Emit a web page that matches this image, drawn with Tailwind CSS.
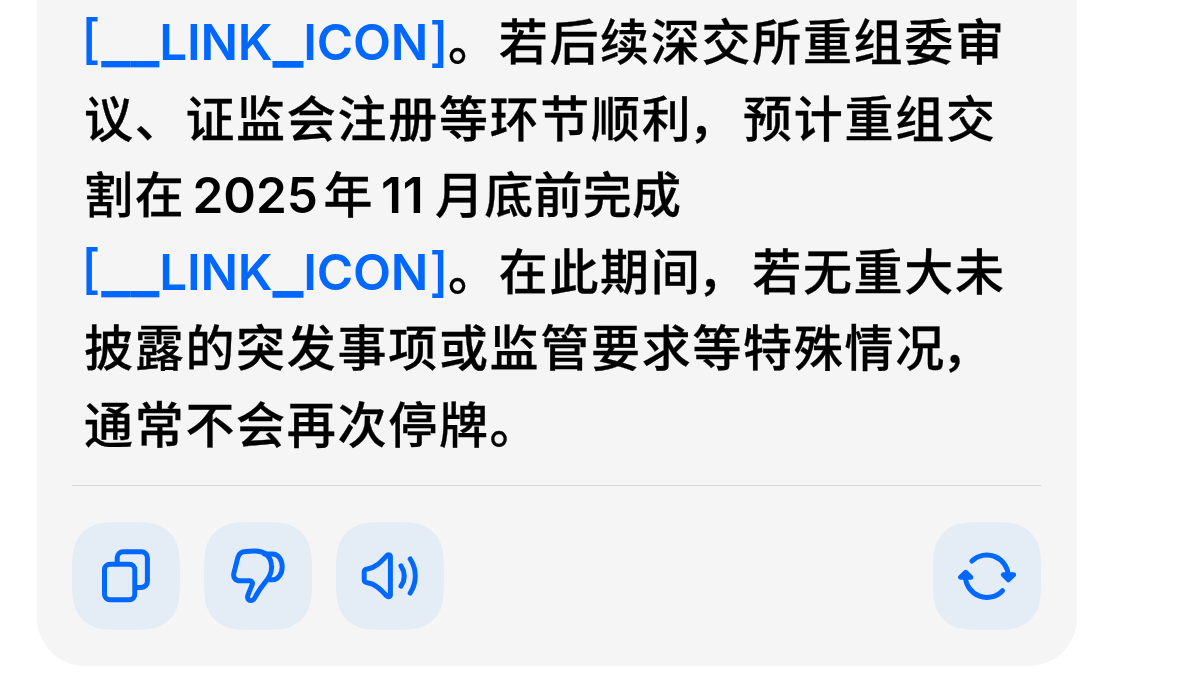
<!DOCTYPE html>
<html lang="zh-CN">
  <head>
    <meta charset="UTF-8" />
    <meta name="viewport" content="width=device-width, initial-scale=1.0" />
    <script src="https://cdn.jsdelivr.net/npm/@tailwindcss/browser@4"></script>
    <title>Chat</title>
  </head>

  <body class="bg-white">
    <svg class="hidden">
      <symbol id="tile" viewBox="0 0 108 108">
        <path
          d="M0 54C0 39.2 0 31.3 2.7 22.7C6.1 13.4 13.4 6.1 22.7 2.7C31.3 0 39.2 0 54 0C68.8 0 76.7 0 85.3 2.7C94.6 6.1 101.9 13.4 105.3 22.7C108 31.3 108 39.2 108 54C108 68.8 108 76.7 105.3 85.3C101.9 94.6 94.6 101.9 85.3 105.3C76.7 108 68.8 108 54 108C39.2 108 31.3 108 22.7 105.3C13.4 101.9 6.1 94.6 2.7 85.3C0 76.7 0 68.8 0 54Z"
        />
      </symbol>
    </svg>

    <div class="w-[1179px] h-[700px] overflow-hidden pl-[37px]">
      <div
        class="w-[1040px] h-[666px] bg-[#f5f5f5] rounded-b-[48px] pt-[5px] pl-[35px] pr-[36px]"
      >
        <div
          class="h-[480px] pl-[12px] font-['Inter','Noto_Sans_CJK_SC',sans-serif] text-[49px] leading-[76.5px] tracking-[1.7px] font-medium text-black whitespace-nowrap [-webkit-text-stroke:0.3px]"
        >
          <p class="flex h-[76.5px]">
            <a class="w-[367px] shrink-0 -ml-[3px] -mt-[1px] text-[#0068ff] text-[49.5px] font-semibold tracking-[-0.2px] [-webkit-text-stroke:0px]"><span class="text-[53px] align-[2px] leading-[0] font-medium mr-[1px]">[</span><span class="text-[62px] leading-[0] align-[-1px]">__</span>LINK<span class="text-[66px] leading-[0] align-[-1px]">_</span>ICON<span class="text-[53px] leading-[0] font-medium ml-[1px] align-[-1px]">]</span></a>
            <span>。若后续深交所重组委审</span>
          </p>
          <p class="flex h-[76.5px]">议、证监会注册等环节顺利<span class="-ml-[4px] mr-[4px]">，</span>预计重组交</p>
          <p class="flex h-[76.5px]">
            割在<span class="w-[138px] pl-[7px] -mt-[1px] text-[49.5px] font-semibold tracking-[0px] [-webkit-text-stroke:0px]">2025</span>年<span class="w-[61px] pl-[7px] -mt-[1px] text-[49.5px] font-semibold tracking-[0.8px] [-webkit-text-stroke:0px]">11</span><span class="tracking-[0.2px]">月底前完成</span>
          </p>
          <p class="flex h-[76.5px]">
            <a class="w-[367px] shrink-0 -ml-[3px] -mt-[1px] text-[#0068ff] text-[49.5px] font-semibold tracking-[-0.2px] [-webkit-text-stroke:0px]"><span class="text-[53px] align-[2px] leading-[0] font-medium mr-[1px]">[</span><span class="text-[62px] leading-[0] align-[-1px]">__</span>LINK<span class="text-[66px] leading-[0] align-[-1px]">_</span>ICON<span class="text-[53px] leading-[0] font-medium ml-[1px] align-[-1px]">]</span></a>
            <span>。在此期间<span class="-ml-[4px] mr-[4px]">，</span>若无重大未</span>
          </p>
          <p class="flex h-[76.5px]">披露的突发事项或监管要求等特殊情况<span class="-ml-[4px]">，</span></p>
          <p class="flex h-[76.5px]">通常不会再次停牌。</p>
        </div>

        <div class="flex gap-[24px] border-t border-[#d9d9d9] pt-[36px]">
          <button type="button" aria-label="复制">
            <svg class="size-[108px]" viewBox="0 0 108 108" fill="none" stroke="#0068ff" stroke-width="5" stroke-linecap="round" stroke-linejoin="round">
              <use href="#tile" fill="#e4edf5" stroke="none" />
              <path stroke-linecap="butt" d="M45.2 42V35.8a6 6 0 0 1 6-6H69.4a6 6 0 0 1 6 6V59.4a6 6 0 0 1-6 6H63" />
              <rect x="32.5" y="42.2" width="30.3" height="35.6" rx="5.5" />
            </svg>
          </button>
          <button type="button" aria-label="踩">
            <svg class="size-[108px]" viewBox="0 0 108 108" fill="none" stroke="#0068ff" stroke-width="5" stroke-linecap="round" stroke-linejoin="round">
              <use href="#tile" fill="#e4edf5" stroke="none" />
              <path d="M42 29.4C38 29.5 35 31.5 34 35L29.9 51C28.8 55.5 31.5 58.8 36 58.8H45.5C48 58.8 49 60.3 48.2 62.5L43.8 73.5C43 76.5 44.5 78.6 46.8 78.6C48.8 78.6 50 77.5 51 75.5C54 69.5 57.5 64.5 61.5 59.8C66.5 54 68.3 48.5 67.4 42.5C66.3 33.5 60.5 29 50 29.1Z" />
              <path d="M60.5 31.9H68.5C74.5 31.9 78.2 38 78.2 45C78.2 52 74 57.8 68.5 57.8H64" />
            </svg>
          </button>
          <button type="button" aria-label="朗读">
            <svg class="size-[108px]" viewBox="0 0 108 108" fill="none" stroke="#0068ff" stroke-width="5" stroke-linecap="round" stroke-linejoin="round">
              <use href="#tile" fill="#e4edf5" stroke="none" />
              <path d="M50.8 33.6C51.9 32.3 54.4 32.8 54.4 34.8V72.8C54.4 74.8 51.9 75.3 50.8 74C44.5 67.2 39 61.6 31.5 60.7C29 60.4 28.2 59.6 28.2 57.5V50.1C28.2 48 29 47.2 31.5 46.9C39 46 44.5 40.4 50.8 33.6Z" />
              <path d="M65 43.8C69.2 50.3 69.2 57.7 65 64.2" />
              <path d="M74.2 37C81 47.5 81 60.5 74.2 71" />
            </svg>
          </button>
          <button type="button" aria-label="重新生成" class="ml-auto">
            <svg class="size-[108px]" viewBox="0 0 108 108" fill="none" stroke="#0068ff" stroke-width="5" stroke-linecap="round" stroke-linejoin="round">
              <use href="#tile" fill="#e4edf5" stroke="none" />
              <path d="M38.9 39A21.5 21.5 0 0 1 75.3 54" />
              <path d="M69.5 68.7A21.5 21.5 0 0 1 32.4 54" />
              <path fill="#0068ff" d="M70.3 52.7H80.6L75.4 57.8Z" />
              <path fill="#0068ff" d="M27.5 55.3H37.8L32.7 50.3Z" />
            </svg>
          </button>
        </div>
      </div>
    </div>
  </body>
</html>
